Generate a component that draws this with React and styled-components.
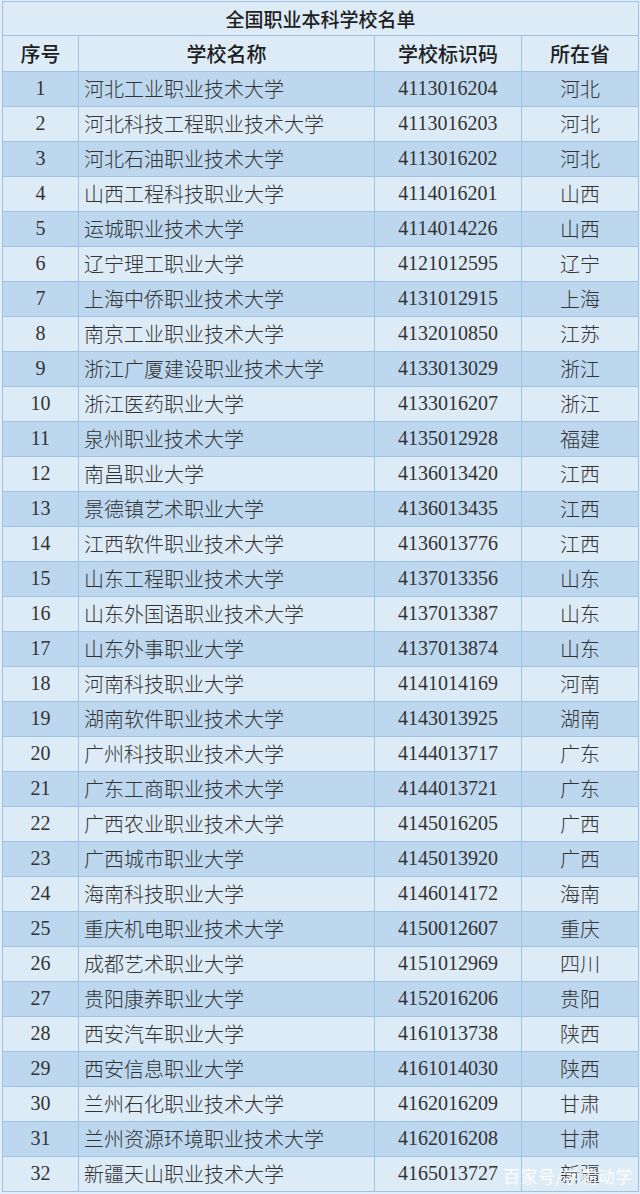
import React from "react";
import styled, { createGlobalStyle } from "styled-components";

const schools = [
  ["河北工业职业技术大学", "4113016204", "河北"],
  ["河北科技工程职业技术大学", "4113016203", "河北"],
  ["河北石油职业技术大学", "4113016202", "河北"],
  ["山西工程科技职业大学", "4114016201", "山西"],
  ["运城职业技术大学", "4114014226", "山西"],
  ["辽宁理工职业大学", "4121012595", "辽宁"],
  ["上海中侨职业技术大学", "4131012915", "上海"],
  ["南京工业职业技术大学", "4132010850", "江苏"],
  ["浙江广厦建设职业技术大学", "4133013029", "浙江"],
  ["浙江医药职业大学", "4133016207", "浙江"],
  ["泉州职业技术大学", "4135012928", "福建"],
  ["南昌职业大学", "4136013420", "江西"],
  ["景德镇艺术职业大学", "4136013435", "江西"],
  ["江西软件职业技术大学", "4136013776", "江西"],
  ["山东工程职业技术大学", "4137013356", "山东"],
  ["山东外国语职业技术大学", "4137013387", "山东"],
  ["山东外事职业大学", "4137013874", "山东"],
  ["河南科技职业大学", "4141014169", "河南"],
  ["湖南软件职业技术大学", "4143013925", "湖南"],
  ["广州科技职业技术大学", "4144013717", "广东"],
  ["广东工商职业技术大学", "4144013721", "广东"],
  ["广西农业职业技术大学", "4145016205", "广西"],
  ["广西城市职业大学", "4145013920", "广西"],
  ["海南科技职业大学", "4146014172", "海南"],
  ["重庆机电职业技术大学", "4150012607", "重庆"],
  ["成都艺术职业大学", "4151012969", "四川"],
  ["贵阳康养职业大学", "4152016206", "贵阳"],
  ["西安汽车职业大学", "4161013738", "陕西"],
  ["西安信息职业大学", "4161014030", "陕西"],
  ["兰州石化职业技术大学", "4162016209", "甘肃"],
  ["兰州资源环境职业技术大学", "4162016208", "甘肃"],
  ["新疆天山职业技术大学", "4165013727", "新疆"],
];

const GlobalStyle = createGlobalStyle`
  html, body {
    margin: 0;
    padding: 0;
    background: #e4eef8;
  }
`;

const Page = styled.div`
  position: relative;
  width: 640px;
  height: 1194px;
  padding: 1px 2px 0 2px;
  box-sizing: border-box;
  overflow: hidden;
`;

const Table = styled.table`
  border-collapse: collapse;
  width: 636px;
  table-layout: fixed;
  color: #2b2b2b;

  td, th {
    border: 1px solid #9cc2e5;
    padding: 0;
    box-sizing: border-box;
  }
`;

const TitleCell = styled.th`
  height: 34px;
  background: #ddebf7;
  font-family: "Noto Sans CJK SC", sans-serif;
  font-weight: 500;
  font-size: 19px;
  color: #1e1e1e;
  text-align: center;
`;

const HeadCell = styled.th`
  height: 36px;
  background: #ddebf7;
  font-family: "Noto Sans CJK SC", sans-serif;
  font-weight: 500;
  font-size: 20px;
  color: #1e1e1e;
  text-align: center;
`;

const Row = styled.tr`
  height: 35px;
  background: ${(p) => (p.$dark ? "#bdd7ee" : "#ddebf7")};
`;

const Cell = styled.td`
  font-family: "Liberation Serif", "Noto Sans CJK SC", serif;
  font-weight: 300;
  font-size: 20px;
  color: #333;
  text-align: ${(p) => p.$align || "center"};
  padding-left: ${(p) => (p.$align === "left" ? "5px" : "0")} !important;
  padding-bottom: 2px !important;
  white-space: nowrap;
`;

const Watermark = styled.div`
  position: absolute;
  left: 503px;
  top: 1163px;
  font-family: "Noto Sans CJK SC", sans-serif;
  font-size: 17px;
  color: rgba(255, 255, 255, 0.92);
  letter-spacing: 0.5px;
  pointer-events: none;
`;

export default function App() {
  return (
    <Page>
      <GlobalStyle />
      <Table>
        <colgroup>
          <col style={{ width: 76 }} />
          <col style={{ width: 296 }} />
          <col style={{ width: 147 }} />
          <col style={{ width: 117 }} />
        </colgroup>
        <thead>
          <tr>
            <TitleCell colSpan={4}>全国职业本科学校名单</TitleCell>
          </tr>
          <tr>
            <HeadCell>序号</HeadCell>
            <HeadCell>学校名称</HeadCell>
            <HeadCell>学校标识码</HeadCell>
            <HeadCell>所在省</HeadCell>
          </tr>
        </thead>
        <tbody>
          {schools.map(([name, code, prov], i) => (
            <Row key={code} $dark={i % 2 === 0}>
              <Cell>{i + 1}</Cell>
              <Cell $align="left">{name}</Cell>
              <Cell>{code}</Cell>
              <Cell>{prov}</Cell>
            </Row>
          ))}
        </tbody>
      </Table>
      <Watermark>百家号/学霸动学</Watermark>
    </Page>
  );
}
